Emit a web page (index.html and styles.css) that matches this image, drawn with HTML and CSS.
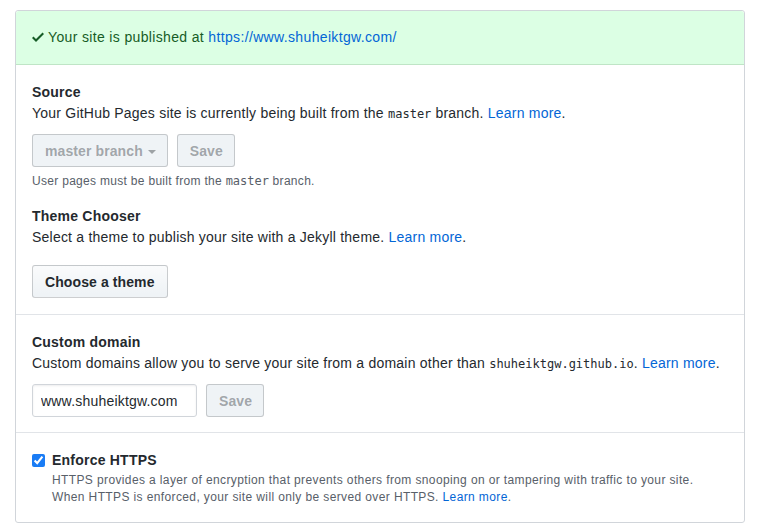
FILE: index.html
```html
<!DOCTYPE html>
<html>
<head>
<meta charset="utf-8">
<link rel="stylesheet" href="styles.css">
</head>
<body>
<div class="box">
  <div class="flash">
    <svg class="check" width="12" height="16" viewBox="0 0 12 16"><path fill-rule="evenodd" d="M12 5l-8 8-4-4 1.5-1.5L4 10l6.5-6.5L12 5z"/></svg> Your site is published at <a href="#">https://www.shuheiktgw.com/</a>
  </div>
  <div class="section">
    <h3 class="heading">Source</h3>
    <p class="desc">Your GitHub Pages site is currently being built from the <code>master</code> branch. <a href="#">Learn more</a>.</p>
    <div class="row">
      <button class="btn disabled">master branch <span class="caret"></span></button>
      <button class="btn disabled">Save</button>
    </div>
    <p class="note">User pages must be built from the <code>master</code> branch.</p>
    <h3 class="heading theme">Theme Chooser</h3>
    <p class="desc">Select a theme to publish your site with a Jekyll theme. <a href="#">Learn more</a>.</p>
    <div class="row theme-row">
      <button class="btn">Choose a theme</button>
    </div>
  </div>
  <div class="section domain">
    <h3 class="heading">Custom domain</h3>
    <p class="desc">Custom domains allow you to serve your site from a domain other than <code>shuheiktgw.github.io</code>. <a href="#">Learn more</a>.</p>
    <div class="row domain-row">
      <input class="input" type="text" value="www.shuheiktgw.com">
      <button class="btn disabled">Save</button>
    </div>
  </div>
  <div class="section https">
    <label class="check-label">
      <input type="checkbox" checked class="cb">
      <span class="heading">Enforce HTTPS</span>
    </label>
    <p class="small">HTTPS provides a layer of encryption that prevents others from snooping on or tampering with traffic to your site.<br>When HTTPS is enforced, your site will only be served over HTTPS. <a href="#">Learn more</a>.</p>
  </div>
</div>
</body>
</html>
```
FILE: styles.css
```css
* { box-sizing: border-box; }
body {
  margin: 0;
  padding: 10px 17px 0 15px;
  font-family: "Liberation Sans", Arial, sans-serif;
  font-size: 14px;
  line-height: 21px;
  color: #24292e;
  background: #fff;
  letter-spacing: 0.22px;
}
a { color: #0366d6; text-decoration: none; }
code {
  font-family: "DejaVu Sans Mono", monospace;
  font-size: 12px;
  letter-spacing: 0;
}
.box {
  border: 1px solid #d1d5da;
  border-radius: 3px;
}
.flash {
  background: #dcffe4;
  border-bottom: 1px solid #bfe5c6;
  padding: 16px;
  color: #165c26;
  border-radius: 3px 3px 0 0;
  height: 54px;
  letter-spacing: 0.35px;
}
.flash .check {
  fill: #165c26;
  vertical-align: -3px;
}
.section {
  padding: 16px;
  border-top: 1px solid #e1e4e8;
}
.section:nth-child(2) { border-top: 0; padding-top: 17px; }
.heading {
  margin: 0;
  font-size: 14px;
  font-weight: 700;
  line-height: 21px;
}
.desc { margin: 0; }
.row { display: flex; gap: 9px; margin-top: 9px; }
.btn {
  font-family: inherit;
  font-size: 14px;
  font-weight: 700;
  letter-spacing: 0.1px;
  height: 33px;
  padding: 0 12px;
  border: 1px solid rgba(27,31,35,0.2);
  border-radius: 3px;
  background: linear-gradient(#fafbfc, #eff3f6 90%);
  color: #24292e;
}
.btn.disabled {
  background: #eff3f6;
  color: rgba(36,41,46,0.4);
  padding: 0 11px 0 12px;
}
.caret {
  display: inline-block;
  width: 0; height: 0;
  border-top: 4px solid rgba(36,41,46,0.4);
  border-left: 4px solid transparent;
  border-right: 4px solid transparent;
  vertical-align: middle;
  margin-left: 1px;
}
.note {
  margin: 5px 0 0;
  font-size: 12px;
  line-height: 18px;
  color: #586069;
  letter-spacing: 0.3px;
}
.theme { margin-top: 16px; }
.theme-row { margin-top: 17px; }
.domain { padding-top: 17px; padding-bottom: 15px; }
.input {
  width: 165px;
  height: 33px;
  font-family: inherit;
  font-size: 14px;
  letter-spacing: 0.2px;
  padding: 0 8px;
  border: 1px solid #d1d5da;
  border-radius: 3px;
  color: #24292e;
  box-shadow: inset 0 1px 2px rgba(27,31,35,0.075);
}
.https { padding-top: 17px; padding-bottom: 16px; }
.check-label { display: flex; align-items: center; gap: 7px; }
.cb { margin: 0; width: 13px; height: 13px; accent-color: #1a7cf5; }
.small {
  margin: 1px 0 0 20px;
  font-size: 12px;
  line-height: 17px;
  color: #586069;
  letter-spacing: 0.38px;
}
```
